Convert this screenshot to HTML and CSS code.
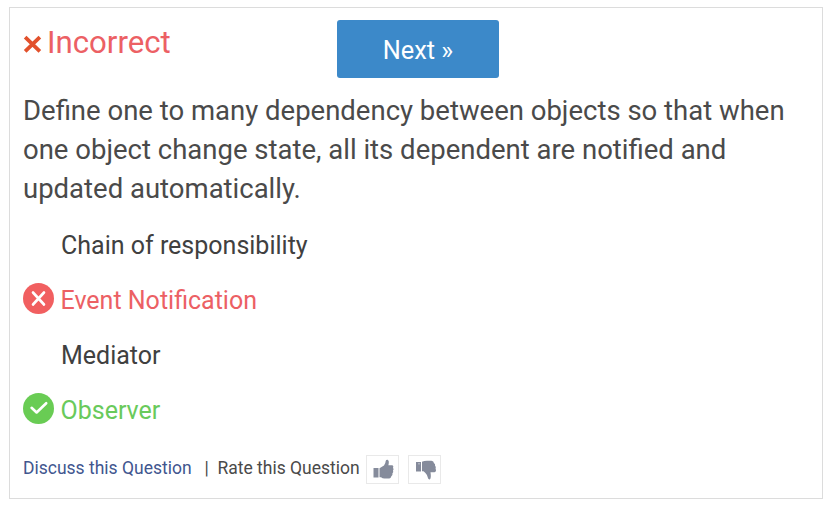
FILE: index.html
```html
<!DOCTYPE html>
<html lang="en">
<head>
<meta charset="utf-8">
<title>Quiz question</title>
<link rel="stylesheet" href="styles.css">
</head>
<body>
<main class="card">
  <header class="head">
    <div class="verdict">
      <svg class="cross" viewBox="0 0 20 20"><path d="M3 3L17 16.500M17 3L3 16.500"/></svg>
      <span>Incorrect</span>
    </div>
    <button class="next">Next »</button>
  </header>
  <p class="question">Define one to many dependency between objects so that when one object change state, all its dependent are notified and updated automatically.</p>
  <ul class="options">
    <li><span class="mark"></span><span class="label">Chain of responsibility</span></li>
    <li class="wrong"><svg class="mark" viewBox="0 0 31 31"><circle cx="15.5" cy="15.5" r="15.5"/><path d="M10 9.500L21 21.500M21 9.500L10 21.500"/></svg><span class="label">Event Notification</span></li>
    <li><span class="mark"></span><span class="label">Mediator</span></li>
    <li class="right"><svg class="mark" viewBox="0 0 31 31"><circle cx="15.5" cy="15.5" r="15.5"/><path d="M8.6 14.8L13.6 19.5L23.2 10.2"/></svg><span class="label">Observer</span></li>
  </ul>
  <footer class="foot">
    <a class="discuss">Discuss this Question</a>
    <span class="sep">|</span>
    <span class="rate">Rate this Question</span>
    <span class="vote"><svg viewBox="0 0 33 29"><path d="M7.500 13h5v9.500h-5zM13.500 13.300L18 10.500Q19.600 8.500 19.700 6Q20.200 4.500 21.600 4.800Q23.600 5.600 22.400 10.200H26Q28 10.700 27 12.700Q28.200 14 27 15.600Q27.800 17.300 26.400 18.500Q27 20.200 25.300 21.200Q25 23.600 22 23.600H18.500Q16.500 23.500 15 22.300H13.500z"/></svg></span>
    <span class="vote"><svg viewBox="0 0 33 29"><path d="M8 7h5v9.500h-5zM14 6.700Q16.500 5.600 20 5.800H23.500Q25.800 6 25.900 8Q27.600 9 27 10.600Q28.300 12 27.600 13.700Q28.800 16.500 26.500 17.300H22.500Q23.500 23.800 21.600 24.400Q20 24.600 19.800 22.600Q19.200 19.500 17.200 17.700L15.500 16.300H14z"/><path class="cuff" d="M11 8v1.500"/></svg></span>
  </footer>
</main>
</body>
</html>
```

FILE: styles.css
```css
* { box-sizing: border-box; }
body {
  margin: 0;
  padding: 7px 15px 10px 9px;
  background: #fff;
  color: #4a4a4a;
  font-family: Roboto, sans-serif;
}
.card {
  height: 492px;
  padding: 12px 13px 0;
  border: 1px solid #dcdcdc;
}
.head {
  display: grid;
  grid-template-columns: 314px 162px;
  height: 58px;
}
.verdict {
  display: flex;
  align-items: center;
  height: 46px;
  color: #ec6064;
  font-size: 31.2px;
  line-height: 46px;
}
.cross {
  width: 21px;
  height: 21px;
  margin: 2px 4px 0 -1px;
  fill: none;
  stroke: #e2512c;
  stroke-width: 3.6;
}
.next {
  padding: 4px 0 0;
  border: 0;
  border-radius: 3px;
  background: #3c89c9;
  color: #fff;
  font: 400 25.3px/54px Roboto, sans-serif;
}
.question {
  margin: 13px 0 0;
  font-size: 27.5px;
  line-height: 39px;
}
.options {
  margin: 10px 0 0;
  padding: 0;
  list-style: none;
  color: #404040;
  font-size: 25px;
}
.options li {
  display: flex;
  align-items: center;
  gap: 7px;
  height: 55px;
}
.options .wrong,
.options .right { gap: 6.5px; }
.mark {
  flex: none;
  width: 31px;
  height: 31px;
  margin-bottom: 4px;
}
.mark path {
  fill: none;
  stroke: #fff;
  stroke-width: 2.6;
  stroke-linecap: round;
  stroke-linejoin: round;
}
.wrong { color: #ec6064; }
.wrong circle { fill: #f15f60; }
.right { color: #69ca5b; }
.right circle { fill: #69cc54; }
.foot {
  display: flex;
  align-items: center;
  height: 29px;
  margin-top: 17px;
  font-size: 17.5px;
}
.discuss,
.sep,
.rate { margin-bottom: 4px; }
.discuss { color: #41568f; }
.sep { margin-right: 8.5px; margin-left: 13px; }
.rate { width: 142px; margin-right: 6.5px; white-space: nowrap; }
.vote {
  width: 33px;
  height: 29px;
  margin-right: 9px;
  border: 1px solid #e9e9e9;
}
.vote svg {
  display: block;
  width: 33px;
  height: 29px;
  margin: -1px;
  fill: #858b9b;
}
.vote .cuff { stroke: #d4d7de; stroke-width: 1; }
```
